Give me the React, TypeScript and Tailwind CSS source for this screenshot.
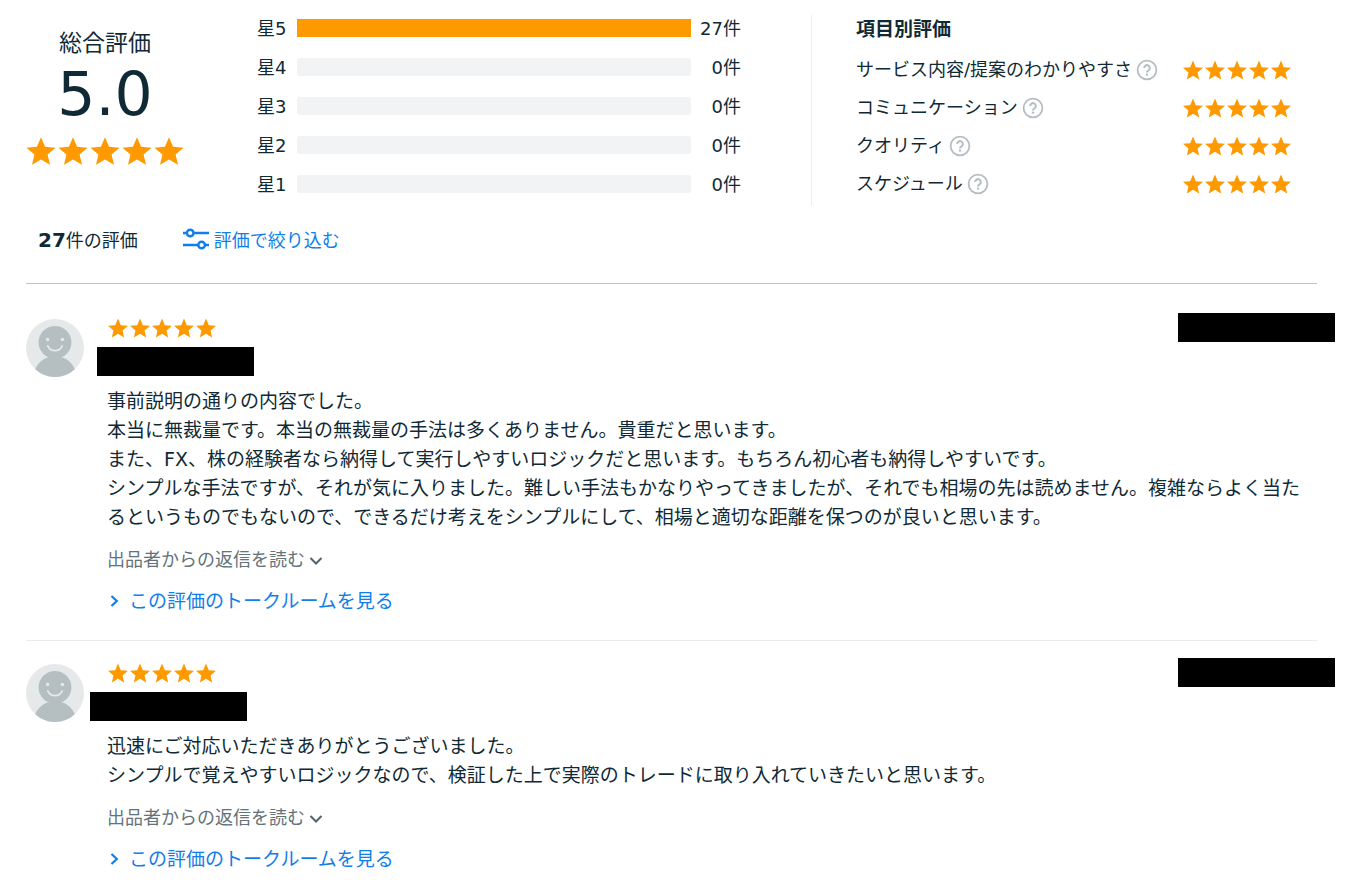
import { useState } from "react";

interface Review {
  id: number;
  lines: string[];
  nameOffset: string;
}

const distribution = [
  { star: 5, count: 27 },
  { star: 4, count: 0 },
  { star: 3, count: 0 },
  { star: 2, count: 0 },
  { star: 1, count: 0 },
];

const total = distribution.reduce((sum, d) => sum + d.count, 0);

const categories = ["サービス内容/提案のわかりやすさ", "コミュニケーション", "クオリティ", "スケジュール"];

const reviews: Review[] = [
  {
    id: 1,
    nameOffset: "-ml-[10px]",
    lines: [
      "事前説明の通りの内容でした。",
      "本当に無裁量です。本当の無裁量の手法は多くありません。貴重だと思います。",
      "また、FX、株の経験者なら納得して実行しやすいロジックだと思います。もちろん初心者も納得しやすいです。",
      "シンプルな手法ですが、それが気に入りました。難しい手法もかなりやってきましたが、それでも相場の先は読めません。複雑ならよく当たるというものでもないので、できるだけ考えをシンプルにして、相場と適切な距離を保つのが良いと思います。",
    ],
  },
  {
    id: 2,
    nameOffset: "-ml-[17px]",
    lines: [
      "迅速にご対応いただきありがとうございました。",
      "シンプルで覚えやすいロジックなので、検証した上で実際のトレードに取り入れていきたいと思います。",
    ],
  },
];

function Stars({ large = false }: { large?: boolean }) {
  return (
    <div className="flex" role="img" aria-label="5.0">
      {[1, 2, 3, 4, 5].map((n) => (
        <svg
          key={n}
          viewBox="1 0.5 22 22"
          className={large ? "size-8 shrink-0 fill-[#ff9900]" : "size-[22px] shrink-0 fill-[#ff9900]"}
        >
          <path d="M12 17.27 18.18 21l-1.64-7.03L22 9.24l-7.19-.61L12 2 9.19 8.63 2 9.24l5.46 4.73L5.82 21z" />
        </svg>
      ))}
    </div>
  );
}

function HelpIcon() {
  return (
    <svg viewBox="0 0 22 22" className="size-[22px]" fill="none" stroke="#b4bec2" strokeWidth="1.8">
      <circle cx="11" cy="11" r="9.4" />
      <path d="M8.2 9a2.8 2.8 0 1 1 4.6 2.1c-1 .8-1.8 1.2-1.8 2.3" strokeWidth="2" />
      <path d="M11 14.6v2" strokeWidth="2.2" />
    </svg>
  );
}

function FilterIcon() {
  return (
    <svg viewBox="0 0 28 26" className="h-[26px] w-7" fill="none" stroke="#117ee9" strokeWidth="2.4">
      <path d="M1 5h4M12 5h15M1 17h15M23 17h4" />
      <circle cx="8.2" cy="5" r="3.3" />
      <circle cx="19.6" cy="17" r="3.3" />
    </svg>
  );
}

function Avatar() {
  return (
    <svg viewBox="0 0 58 58" className="size-[58px] shrink-0">
      <circle cx="29" cy="29" r="29" fill="#e5e9ea" />
      <path d="M9.2 50.2C12.5 43 18.5 38 25 38h8c6.5 0 12.5 5 15.8 12.2A29 29 0 0 1 9.2 50.2z" fill="#b5bfc2" />
      <circle cx="29" cy="23.3" r="16.4" fill="#b5bfc2" />
      <circle cx="21.6" cy="20.5" r="1.7" fill="#e5e9ea" />
      <circle cx="36.4" cy="20.5" r="1.7" fill="#e5e9ea" />
      <path d="M21.8 26.8c2.8 6.4 11.6 6.4 14.4 0" fill="none" stroke="#e5e9ea" strokeWidth="1.7" strokeLinecap="round" />
    </svg>
  );
}

function Summary() {
  return (
    <section className="flex items-start">
      <div className="flex w-[158px] shrink-0 flex-col items-center pt-3">
        <h2 className="text-[23px] leading-8">総合評価</h2>
        <p className="mt-1 mb-2.5 text-[60px] leading-[62px]">5.0</p>
        <Stars large />
      </div>

      {/* Distribution by star count */}
      <ul className="mr-[70px] ml-[73px] flex flex-1 flex-col gap-[13px] text-lg leading-6">
        {distribution.map((d) => (
          <li key={d.star} className="flex items-center">
            <span className="w-10 shrink-0 pt-0.5">星{d.star}</span>
            <div className={`h-[18px] flex-1 bg-[#f2f3f5] ${d.count > 0 ? "" : "rounded-[3px]"}`}>
              <div className="h-full bg-[#ff9900]" style={{ width: `${(d.count / total) * 100}%` }} />
            </div>
            <span className="w-[50px] shrink-0 pt-0.5 text-right">{d.count}件</span>
          </li>
        ))}
      </ul>

      {/* Scores by category */}
      <div className="w-[506px] shrink-0 border-l border-[#eceeef] pr-[25px] pb-[10px] pl-11">
        <h3 className="pt-0.5 text-[19px] leading-6 font-bold">項目別評価</h3>
        <ul className="mt-[17px] flex flex-col gap-[14px] text-lg leading-6">
          {categories.map((name) => (
            <li key={name} className="flex items-center">
              <span>{name}</span>
              <button type="button" aria-label={`${name}の説明`} className="ml-1">
                <HelpIcon />
              </button>
              <div className="ml-auto">
                <Stars />
              </div>
            </li>
          ))}
        </ul>
      </div>
    </section>
  );
}

function ReviewItem({ review }: { review: Review }) {
  const [open, setOpen] = useState(false);

  return (
    <li className="flex items-start gap-[23px] border-b border-[#e9ebec] pt-[23px] pb-[26px] last:border-b-0">
      <Avatar />
      <div className="-mt-0.5 min-w-0 flex-1">
        <div className="flex items-start justify-between">
          <div>
            <Stars />
            <div className={`mt-2 h-[29px] w-[157px] bg-black ${review.nameOffset}`} />
          </div>
          <div className="-mt-1 -mr-[18px] h-[29px] w-[157px] bg-black" />
        </div>

        <div className="mt-[11px] text-[19px] leading-[29px] break-all">
          {review.lines.map((line) => (
            <p key={line}>{line}</p>
          ))}
        </div>

        <button
          type="button"
          aria-expanded={open}
          onClick={() => setOpen(!open)}
          className="mt-4 flex items-center text-lg leading-6 text-[#63737a]"
        >
          出品者からの返信を読む
          <svg viewBox="0 0 14 14" className="ml-1 size-[14px]" fill="none" stroke="#52636b" strokeWidth="2">
            <path d="M1.5 5 7 10.5 12.5 5" />
          </svg>
        </button>

        <a href="#talkroom" className="mt-4 flex w-fit items-center text-[19px] leading-[26px] text-[#117ee9]">
          <svg viewBox="0 0 14 14" className="mr-2 size-[14px]" fill="none" stroke="#117ee9" strokeWidth="2.2">
            <path d="M4.5 2 9.8 7 4.5 12" />
          </svg>
          この評価のトークルームを見る
        </a>
      </div>
    </li>
  );
}

export default function App() {
  return (
    <main className="bg-white pt-[15px] pr-11 pl-[26px] font-['DejaVu_Sans','Noto_Sans_CJK_JP',sans-serif] text-[#0f2a35]">
      <Summary />

      {/* Count and filter */}
      <div className="flex items-center gap-11 border-b border-[#bcc6c9] pt-5 pb-7 pl-3 text-lg leading-7">
        <p>
          <strong className="text-xl leading-7">{total}</strong>件の評価
        </p>
        <button type="button" className="flex items-center gap-1 text-[#117ee9]">
          <FilterIcon />
          評価で絞り込む
        </button>
      </div>

      <ul className="pt-3">
        {reviews.map((r) => (
          <ReviewItem key={r.id} review={r} />
        ))}
      </ul>
    </main>
  );
}
